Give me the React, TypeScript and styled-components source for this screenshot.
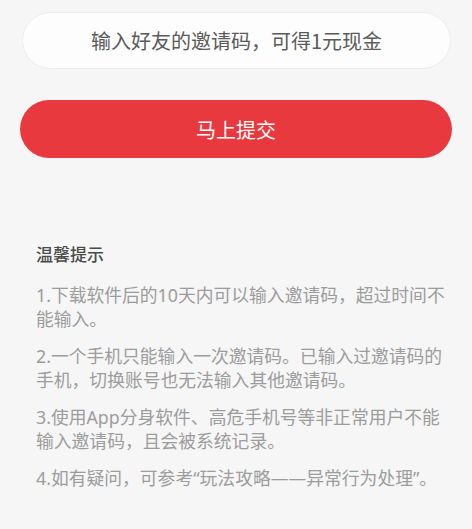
import React from "react";
import styled, { createGlobalStyle } from "styled-components";

const GlobalStyle = createGlobalStyle`
  html, body {
    margin: 0;
    padding: 0;
    background: #f6f6f6;
  }
  body {
    font-family: "Noto Sans CJK SC", "Noto Sans", sans-serif;
  }
`;

const tips = [
  "1.下载软件后的10天内可以输入邀请码，超过时间不能输入。",
  "2.一个手机只能输入一次邀请码。已输入过邀请码的手机，切换账号也无法输入其他邀请码。",
  "3.使用App分身软件、高危手机号等非正常用户不能输入邀请码，且会被系统记录。",
  "4.如有疑问，可参考“玩法攻略——异常行为处理”。",
];

const App = () => {
  return (
    <>
      <GlobalStyle />
      <Page>
        <CodeInput placeholder="输入好友的邀请码，可得1元现金" />
        <SubmitButton type="button">马上提交</SubmitButton>
        <Tips>
          <TipsTitle>温馨提示</TipsTitle>
          {tips.map((tip, index) => (
            <TipItem key={index}>{tip}</TipItem>
          ))}
        </Tips>
      </Page>
    </>
  );
};

const Page = styled.div`
  display: flex;
  flex-direction: column;
  min-height: 529px;
  box-sizing: border-box;
  padding: 12px 20px 0;
  background: #f6f6f6;
`;

const CodeInput = styled.input`
  box-sizing: border-box;
  height: 57px;
  margin: 0 1px 0 2px;
  border: 1px solid #ededed;
  border-radius: 29px;
  background: #fdfdfd;
  outline: none;
  text-align: center;
  font-family: inherit;
  font-size: 20px;
  color: #555;

  &::placeholder {
    color: #5a5a5a;
  }
`;

const SubmitButton = styled.button`
  box-sizing: border-box;
  height: 58px;
  margin-top: 31px;
  border: none;
  border-radius: 29px;
  background: #e8393e;
  color: #fff;
  font-family: inherit;
  font-size: 20px;
  cursor: pointer;
`;

const Tips = styled.div`
  display: flex;
  flex-direction: column;
  gap: 13px;
  margin-top: 84px;
  padding: 0 4px 0 16px;
`;

const TipsTitle = styled.div`
  font-size: 17px;
  line-height: 24px;
  font-weight: 500;
  color: #4a4a4a;
  margin-bottom: 4px;
`;

const TipItem = styled.p`
  margin: 0;
  font-family: "Noto Sans", "Noto Sans CJK SC", sans-serif;
  font-size: 17.8px;
  line-height: 24px;
  color: #9c9c9c;
`;

export default App;
